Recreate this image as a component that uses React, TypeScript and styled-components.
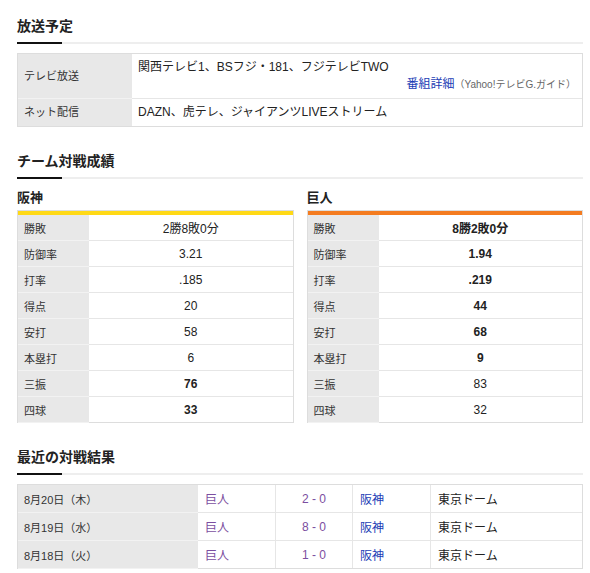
import React from "react";
import styled, { createGlobalStyle } from "styled-components";

const Global = createGlobalStyle`
  html, body { margin: 0; padding: 0; background: #fff; }
  body {
    font-family: "Liberation Sans", "Noto Sans CJK JP", sans-serif;
    color: #222;
    -webkit-font-smoothing: antialiased;
  }
  * { box-sizing: border-box; }
`;

const Page = styled.div`
  padding: 0 7px 20px 17px;
  width: 590px;
`;

const Section = styled.section<{ $top: number }>`
  margin-top: ${(p) => p.$top}px;
`;

const SectionTitle = styled.h2`
  position: relative;
  margin: 0;
  font-size: 14px;
  font-weight: bold;
  line-height: 20px;
  color: #222;
  padding-bottom: 6px;
  border-bottom: 2px solid #eee;
  &::after {
    content: "";
    position: absolute;
    left: 0;
    bottom: -2px;
    width: 45px;
    height: 2px;
    background: #111;
  }
`;

const InfoTable = styled.div`
  margin-top: 9px;
  border: 1px solid #ddd;
  display: grid;
  grid-template-columns: 114px 1fr;
`;

const InfoLabel = styled.div<{ $last?: boolean }>`
  background: #e8e8e8;
  font-size: 11px;
  color: #333;
  padding: 5px 6px;
  line-height: 17px;
  display: flex;
  align-items: center;
  border-bottom: ${(p) => (p.$last ? "none" : "1px solid #f2f2f2")};
`;

const InfoValue = styled.div<{ $last?: boolean }>`
  font-size: 12px;
  line-height: 17px;
  padding: 5px 6px;
  color: #222;
  border-bottom: ${(p) => (p.$last ? "none" : "1px solid #e6e6e6")};
`;

const GuideLine = styled.div`
  text-align: right;
`;

const BlueLink = styled.a`
  color: #1a3db5;
  text-decoration: none;
`;

const Note = styled.span`
  font-size: 10px;
  color: #666;
`;

const TeamGrid = styled.div`
  display: grid;
  grid-template-columns: 1fr 1fr;
  column-gap: 13px;
  margin-top: 10px;
`;

const TeamName = styled.h3`
  margin: 0;
  font-size: 13px;
  font-weight: bold;
  line-height: 18px;
  padding-bottom: 3px;
  color: #222;
`;

const StatTable = styled.div<{ $color: string }>`
  border: 1px solid #ddd;
  &::before {
    content: "";
    display: block;
    height: 4px;
    background: ${(p) => p.$color};
  }
`;

const StatRow = styled.div`
  display: grid;
  grid-template-columns: 71px 1fr;
  height: 26px;
  border-bottom: 1px solid #e6e6e6;
  &:last-child {
    border-bottom: none;
    height: 25px;
  }
`;

const StatLabel = styled.div`
  background: #e8e8e8;
  font-size: 11px;
  color: #333;
  padding: 0 6px;
  display: flex;
  align-items: center;
  border-bottom: 1px solid #f2f2f2;
  margin-bottom: -1px;
`;

const StatValue = styled.div<{ $bold?: boolean }>`
  font-size: 12px;
  color: #222;
  font-weight: ${(p) => (p.$bold ? "bold" : "normal")};
  display: flex;
  align-items: center;
  justify-content: center;
`;

const ResultTable = styled.div`
  margin-top: 9px;
  border: 1px solid #ddd;
`;

const ResultRow = styled.div`
  display: grid;
  grid-template-columns: 180px 77px 77px 78px 1fr;
  height: 28px;
  border-bottom: 1px solid #e6e6e6;
  &:last-child {
    border-bottom: none;
    height: 27px;
  }
`;

const DateCell = styled.div`
  background: #e8e8e8;
  font-size: 11px;
  color: #333;
  padding: 0 6px;
  display: flex;
  align-items: center;
  border-bottom: 1px solid #f2f2f2;
  margin-bottom: -1px;
`;

const ResultCell = styled.div<{ $color?: string; $center?: boolean; $divider?: boolean }>`
  font-size: 12px;
  color: ${(p) => p.$color ?? "#222"};
  padding: 0 7px;
  display: flex;
  align-items: center;
  justify-content: ${(p) => (p.$center ? "center" : "flex-start")};
  border-left: ${(p) => (p.$divider ? "1px solid #e6e6e6" : "none")};
`;

type Stat = { label: string; value: string; bold?: boolean };

const hanshin: Stat[] = [
  { label: "勝敗", value: "2勝8敗0分" },
  { label: "防御率", value: "3.21" },
  { label: "打率", value: ".185" },
  { label: "得点", value: "20" },
  { label: "安打", value: "58" },
  { label: "本塁打", value: "6" },
  { label: "三振", value: "76", bold: true },
  { label: "四球", value: "33", bold: true },
];

const giants: Stat[] = [
  { label: "勝敗", value: "8勝2敗0分", bold: true },
  { label: "防御率", value: "1.94", bold: true },
  { label: "打率", value: ".219", bold: true },
  { label: "得点", value: "44", bold: true },
  { label: "安打", value: "68", bold: true },
  { label: "本塁打", value: "9", bold: true },
  { label: "三振", value: "83" },
  { label: "四球", value: "32" },
];

const results = [
  { date: "8月20日（木）", score: "2 - 0" },
  { date: "8月19日（水）", score: "8 - 0" },
  { date: "8月18日（火）", score: "1 - 0" },
];

const PURPLE = "#7b4ea0";
const BLUE = "#1a3db5";

function TeamBlock({ name, color, stats }: { name: string; color: string; stats: Stat[] }) {
  return (
    <div>
      <TeamName>{name}</TeamName>
      <StatTable $color={color}>
        {stats.map((s) => (
          <StatRow key={s.label}>
            <StatLabel>{s.label}</StatLabel>
            <StatValue $bold={s.bold}>{s.value}</StatValue>
          </StatRow>
        ))}
      </StatTable>
    </div>
  );
}

export default function App() {
  return (
    <>
      <Global />
      <Page>
        <Section $top={16}>
          <SectionTitle>放送予定</SectionTitle>
          <InfoTable>
            <InfoLabel>テレビ放送</InfoLabel>
            <InfoValue>
              <div>関西テレビ1、BSフジ・181、フジテレビTWO</div>
              <GuideLine>
                <BlueLink href="#">番組詳細</BlueLink>
                <Note>（Yahoo!テレビG.ガイド）</Note>
              </GuideLine>
            </InfoValue>
            <InfoLabel $last>ネット配信</InfoLabel>
            <InfoValue $last>DAZN、虎テレ、ジャイアンツLIVEストリーム</InfoValue>
          </InfoTable>
        </Section>

        <Section $top={24}>
          <SectionTitle>チーム対戦成績</SectionTitle>
          <TeamGrid>
            <TeamBlock name="阪神" color="#ffd916" stats={hanshin} />
            <TeamBlock name="巨人" color="#f47c20" stats={giants} />
          </TeamGrid>
        </Section>

        <Section $top={24}>
          <SectionTitle>最近の対戦結果</SectionTitle>
          <ResultTable>
            {results.map((r) => (
              <ResultRow key={r.date}>
                <DateCell>{r.date}</DateCell>
                <ResultCell $color={PURPLE}>巨人</ResultCell>
                <ResultCell $color={PURPLE} $center $divider>
                  {r.score}
                </ResultCell>
                <ResultCell $color={BLUE} $divider>
                  阪神
                </ResultCell>
                <ResultCell $divider>東京ドーム</ResultCell>
              </ResultRow>
            ))}
          </ResultTable>
        </Section>
      </Page>
    </>
  );
}
